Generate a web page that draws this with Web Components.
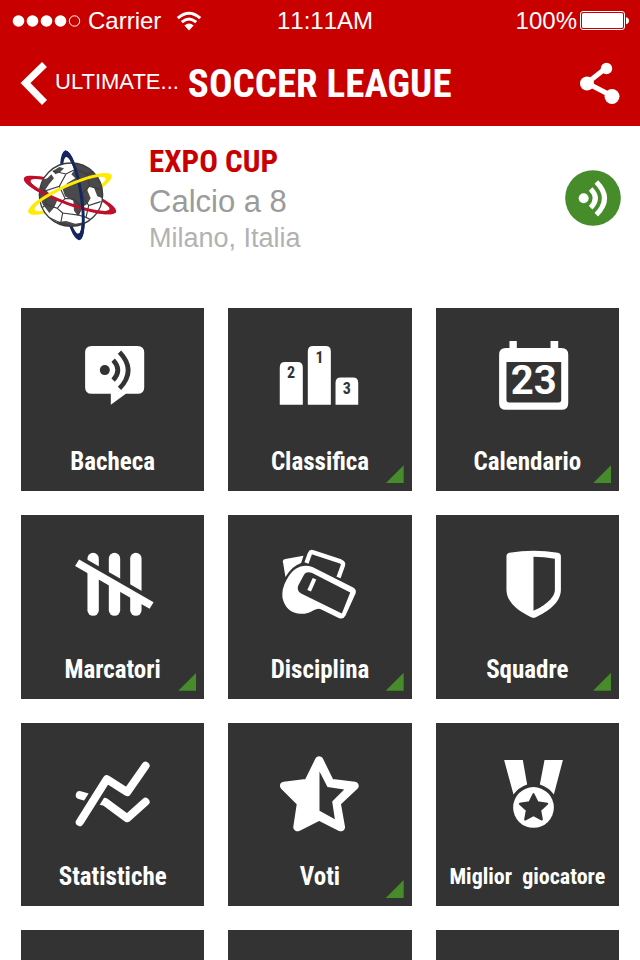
<!DOCTYPE html>
<html lang="it">
<head>
<meta charset="utf-8">
<meta name="viewport" content="width=device-width, initial-scale=1">
<title>Soccer League</title>
<style>
  :root {
    --red: #c80000;
    --dark: #333333;
    --green: #468c2b;
    --narrow: "Liberation Sans Narrow", "Roboto Condensed", "Liberation Sans", sans-serif;
  }
  html, body { margin: 0; height: 100%; }
  body {
    background: #fff;
    font-family: "Liberation Sans", Arial, sans-serif;
    overflow: hidden;
  }
</style>
</head>
<body>
<league-app></league-app>

<script>
const define = (name, html) => {
  const template = document.createElement('template');
  template.innerHTML = html;
  customElements.define(name, class extends HTMLElement {
    constructor() {
      super();
      this.attachShadow({ mode: 'open' }).append(template.content.cloneNode(true));
    }
    connectedCallback() {
      const label = this.shadowRoot.querySelector('[data-label]');
      if (label && this.hasAttribute('label')) label.textContent = this.getAttribute('label');
    }
  });
};

define('status-bar', `
  <style>
    :host { display: grid; grid-template-columns: 1fr auto 1fr; align-items: center; height: 42px;
      padding: 0 11px; background: var(--red); color: #fff; font-size: 24px; line-height: 28px; font-kerning: none; }
    div { display: flex; align-items: center; }
    .signal { margin: 0 7px 0 1px; }
    .wifi { margin-left: 15px; }
    .power { justify-content: flex-end; gap: 2px; }
    .time { padding-left: 10px; }
  </style>
  <div>
    <svg class="signal" width="69" height="14" viewBox="0 0 69 14" fill="#fff" aria-hidden="true">
      <circle cx="6.5" cy="7" r="5.8"/><circle cx="20.5" cy="7" r="5.8"/><circle cx="34.5" cy="7" r="5.8"/><circle cx="48.5" cy="7" r="5.8"/>
      <circle cx="62.5" cy="7" r="5.2" fill="none" stroke="#fff"/>
    </svg>
    <span>Carrier</span>
    <svg class="wifi" width="26" height="20" viewBox="0 0 26 20" fill="none" stroke="#fff" stroke-width="3" aria-hidden="true">
      <path d="M1.8 7.2Q13 -2.8 24.2 7.2M5.8 11.2Q13 4.8 20.2 11.2"/>
      <path d="M8.4 14.6Q13 10.4 17.6 14.6L13 19.4Z" fill="#fff" stroke="none"/>
    </svg>
  </div>
  <span class="time">11:11AM</span>
  <div class="power">
    <span>100%</span>
    <svg width="50" height="20" viewBox="0 0 50 20" fill="#fff" aria-hidden="true">
      <rect x="1.5" y=".5" width="44" height="18" rx="2.5" fill="none" stroke="#fff"/>
      <rect x="3" y="2" width="41" height="15" rx="1.5"/>
      <path d="M47 6.2Q50 7 50 9.7T47 13.2Z"/>
    </svg>
  </div>
`);

define('nav-bar', `
  <style>
    :host { display: flex; align-items: center; height: 84px; padding: 0 20px;
      background: var(--red); color: #fff; }
    a { display: flex; align-items: center; gap: 7px; color: inherit; text-decoration: none;
      font-size: 22px; line-height: 26px; }
    a span { padding-bottom: 4px; }
    h1 { flex: 1; margin: 0 0 0 9px; font: bold 39px/44px var(--narrow); white-space: nowrap; }
    button { border: 0; padding: 0; background: none; color: inherit; display: flex; }
  </style>
  <a href="#">
    <svg width="28" height="46" viewBox="0 0 28 46" fill="none" stroke="#fff" stroke-width="7" aria-hidden="true">
      <path d="M24.5 3.5L5.5 22L24.5 41.5"/>
    </svg>
    <span>ULTIMATE...</span>
  </a>
  <h1>SOCCER LEAGUE</h1>
  <button type="button" aria-label="Condividi">
    <svg width="42" height="44" viewBox="0 0 42 44" fill="#fff" aria-hidden="true">
      <path d="M28 6L9 21L34 34" fill="none" stroke="#fff" stroke-width="5"/>
      <circle cx="28.500" cy="6.500" r="5.700"/><circle cx="9" cy="21.500" r="7"/><circle cx="34" cy="34.500" r="7.500"/>
    </svg>
  </button>
`);

define('league-card', `
  <style>
    :host { display: flex; align-items: flex-start; padding: 18px 19px 0 21px; height: 164px; }
    .logo { flex: none; }
    .text { flex: 1; margin-left: 28px; white-space: nowrap; }
    h2, p { margin: 0; }
    h2 { color: var(--red); font: bold 31px/36px var(--narrow); }
    .sport { color: #9b9b9b; font-size: 31px; line-height: 44px; }
    .place { color: #b2b2b2; font-size: 27px; line-height: 28px; }
    button { border: 0; padding: 0; background: none; display: flex; margin-top: 26px; }
  </style>
  <svg class="logo" width="100" height="100" viewBox="33 15 300 300" aria-hidden="true">
    <defs>
      <path id="ring" fill-rule="evenodd" d="M-136 0A136 31 0 1 0 136 0A136 31 0 1 0 -136 0ZM-117 0A117 22 0 1 0 117 0A117 22 0 1 0 -117 0Z"/>
      <clipPath id="upper"><rect x="-160" y="-50" width="320" height="52"/></clipPath>
      <clipPath id="lower"><rect x="-160" y="-2" width="320" height="52"/></clipPath>
      <clipPath id="ball"><circle cx="183" cy="167" r="95"/></clipPath>
    </defs>
    <use href="#ring" fill="#14255f" transform="translate(187 169) rotate(81)"/>
    <use href="#ring" fill="#c10f2b" transform="translate(180 168) rotate(20) scale(1.080 1)"/>
    <use href="#ring" fill="#ffeb00" transform="translate(180 165) rotate(-24)"/>
    <circle cx="183" cy="167" r="95" fill="#fff"/>
    <g clip-path="url(#ball)">
      <g fill="#4a4a4c">
        <path d="M183 70L235 75L280 130L282 180L262 172L252 146L238 140L232 154L242 178L232 195L216 205L204 232L192 215L190 185L165 172L158 150L172 132L196 118L184 106L194 92Z"/>
        <path d="M88 125L112 118L124 106L132 118L118 134L106 152L128 172L142 184L132 206L118 222L98 196L86 168Z"/>
        <path d="M128 96L148 84L162 88L150 100L136 106Z"/>
        <path d="M138 250L168 246L196 254L222 250L206 270L160 266Z"/>
      </g>
      <g fill="none" stroke="#3c3c3e" stroke-width="3.500">
        <path d="M128 96L168 105L198 90L190 70M198 90L230 105L252 98M230 105L238 142L276 152M238 142L215 165L236 200L272 188M236 200L228 235L248 245M228 235L205 228M168 105L148 142L104 156L92 142M148 142L165 178L142 208L108 196L92 210M108 196L104 156M142 208L158 222L152 252L118 236M158 222L205 228L216 205L190 180L165 178M152 252L185 262"/>
      </g>
    </g>
    <circle cx="183" cy="167" r="95" fill="none" stroke="#3c3c3e" stroke-width="4"/>
    <g transform="translate(180 168) rotate(20) scale(1.080 1)"><use href="#ring" fill="#c10f2b" clip-path="url(#lower)"/></g>
    <g transform="translate(187 169) rotate(81)"><use href="#ring" fill="#14255f" clip-path="url(#upper)"/></g>
    <g transform="translate(180 165) rotate(-24)"><use href="#ring" fill="#ffeb00" clip-path="url(#upper)"/></g>
  </svg>
  <div class="text">
    <h2>EXPO CUP</h2>
    <p class="sport">Calcio a 8</p>
    <p class="place">Milano, Italia</p>
  </div>
  <button type="button" aria-label="Diretta">
    <svg width="56" height="56" viewBox="45 59 168 168" fill="none" stroke="#fff" stroke-width="15" aria-hidden="true">
      <circle cx="129" cy="143" r="83.500" fill="#468c2b" stroke="none"/>
      <circle cx="101" cy="144" r="15" fill="#fff" stroke="none"/>
      <path d="M122 116Q150 144 122 172M139 95Q188 144 139 193"/>
    </svg>
  </button>
`);

define('menu-tile', `
  <style>
    :host { display: block; aspect-ratio: 1; position: relative; }
    button { display: flex; flex-direction: column; width: 100%; height: 100%; border: 0; padding: 0;
      background: var(--dark); color: #fff; text-align: center; }
    ::slotted(svg) { display: block; width: 100%; aspect-ratio: 549 / 414; }
    .label { width: 100%; font: bold 25px/32px var(--narrow); white-space: pre; }
    :host([long]) .label { font-size: 22px; }
    .badge { display: none; position: absolute; right: 8px; bottom: 8px; width: 18px; height: 18px;
      background: var(--green); clip-path: polygon(100% 0, 100% 100%, 0 100%); }
    :host([more]) .badge { display: block; }
  </style>
  <button type="button">
    <slot></slot>
    <span class="label" data-label></span>
  </button>
  <span class="badge"></span>
`);

define('menu-grid', `
  <style>
    :host { display: grid; grid-template-columns: repeat(3, 1fr); gap: 24px; padding: 0 21px 24px; }
  </style>
  <slot></slot>
`);

define('league-app', `
  <style>
    :host { display: block; height: 100vh; overflow: hidden; }
    svg { fill: #fff; }
    text { font-family: Roboto, sans-serif; font-weight: bold; text-anchor: middle; }
    .rank { font-family: var(--narrow); font-size: 48px; }
    .cut { fill: #333; }
    .line { fill: none; stroke: #fff; }
    .gap { fill: none; stroke: #333; }
  </style>
  <status-bar></status-bar>
  <nav-bar></nav-bar>
  <league-card></league-card>
  <menu-grid>
    <menu-tile label="Bacheca">
      <svg viewBox="33 24 549 414">
        <path d="M245 138H382Q402 138 402 158V261Q402 281 382 281H347L302 314V281H245Q225 281 225 261V158Q225 138 245 138Z"/>
        <circle class="cut" cx="284" cy="210" r="15"/>
        <path class="gap" stroke-width="14" d="M309 180Q337 210 309 240M328 156Q380 210 328 265"/>
      </svg>
    </menu-tile>
    <menu-tile label="Classifica" more>
      <svg viewBox="27 24 549 414">
        <path d="M182 314V202Q182 186 198 186H235Q251 186 251 202V314ZM266 314V154Q266 138 282 138H319Q335 138 335 154V314ZM349 314V248Q349 232 365 232H401Q417 232 417 248V314Z"/>
        <text class="cut rank" x="216" y="235">2</text>
        <text class="cut rank" x="301" y="188">1</text>
        <text class="cut rank" x="383" y="283">3</text>
      </svg>
    </menu-tile>
    <menu-tile label="Calendario" more>
      <svg viewBox="18 24 549 414">
        <path fill-rule="evenodd" d="M238 123H260V144H361V123H384V144H394Q414 144 414 164V309Q414 329 394 329H227Q207 329 207 309V164Q207 144 227 144H238ZM229 186V299Q229 307 237 307H385Q393 307 393 299V186Z"/>
        <text x="311" y="282" font-size="120">23</text>
      </svg>
    </menu-tile>
    <menu-tile label="Marcatori" more>
      <svg viewBox="33 16 549 414">
        <rect x="232" y="129" width="34" height="189" rx="17"/>
        <rect x="296" y="129" width="34" height="189" rx="17"/>
        <rect x="360" y="129" width="34" height="189" rx="17"/>
        <path class="cut" d="M207 136L430 264V280L207 152Z"/>
        <path d="M207 149L430 277L418 297L195 169Z"/>
      </svg>
    </menu-tile>
    <menu-tile label="Disciplina" more>
      <svg viewBox="27 16 549 414">
        <path d="M192 159Q188 151 199 148L253 138L246 160Q220 168 199 202Z"/>
        <path class="line" stroke-width="13" stroke-linejoin="round" d="M262 160L272 132Q275 125 282 128L364 155Q374 159 371 167L358 203"/>
        <path fill-rule="evenodd" d="M230 177Q252 162 280 172L402 233Q413 239 409 251L379 317Q373 329 360 325L305 298Q295 295 282 302Q266 313 242 312Q200 308 190 264Q187 236 203 209Q214 188 230 177ZM279 190Q260 183 253 198L237 228Q232 243 246 251L368 311L393 248Z"/>
        <path class="line" stroke-width="12" d="M286 207L270 243"/>
      </svg>
    </menu-tile>
    <menu-tile label="Squadre" more>
      <svg viewBox="18 16 549 414">
        <path fill-rule="evenodd" d="M229 140Q229 131 238 129Q310 117 383 129Q392 131 392 140V240C392 280 350 307 317 322Q310 325 303 322C270 307 229 280 229 240ZM310 141V303C334 293 374 268 374 240V147Q342 141 310 141Z"/>
      </svg>
    </menu-tile>
    <menu-tile label="Statistiche">
      <svg viewBox="33 9 549 414">
        <g class="line" stroke-width="24" stroke-linecap="round" stroke-linejoin="round">
          <path d="M209 225L240 234M262 240L284 245L351 294L406 245"/>
          <path class="gap" stroke-width="46" stroke-linecap="butt" d="M209 306L280 192"/>
          <path d="M209 306L290 177L351 216L406 137"/>
        </g>
      </svg>
    </menu-tile>
    <menu-tile label="Voti" more>
      <svg viewBox="657 9 549 414">
        <path stroke="#fff" stroke-width="25" stroke-linejoin="round" d="M930 121L963 188L1036 197L982 248L995 321L930 288L865 321L876 248L825 197L897 188Z"/>
        <path class="cut" d="M931 154L955 201L1005 208L969 244L977 297L931 272Z"/>
      </svg>
    </menu-tile>
    <menu-tile label="Miglior  giocatore" long>
      <svg viewBox="18 9 549 414">
        <path d="M222 120H278L291 193Q265 202 250 223ZM398 120H343L329 193Q356 202 371 223Z"/>
        <circle cx="310" cy="262" r="61"/>
        <path class="cut" stroke="#333" stroke-width="6" stroke-linejoin="round" d="M310 222L322 246L351 251L330 270L335 298L310 285L285 298L290 270L269 251L298 246Z"/>
      </svg>
    </menu-tile>
    <menu-tile></menu-tile>
    <menu-tile></menu-tile>
    <menu-tile></menu-tile>
  </menu-grid>
`);
</script>
</body>
</html>
